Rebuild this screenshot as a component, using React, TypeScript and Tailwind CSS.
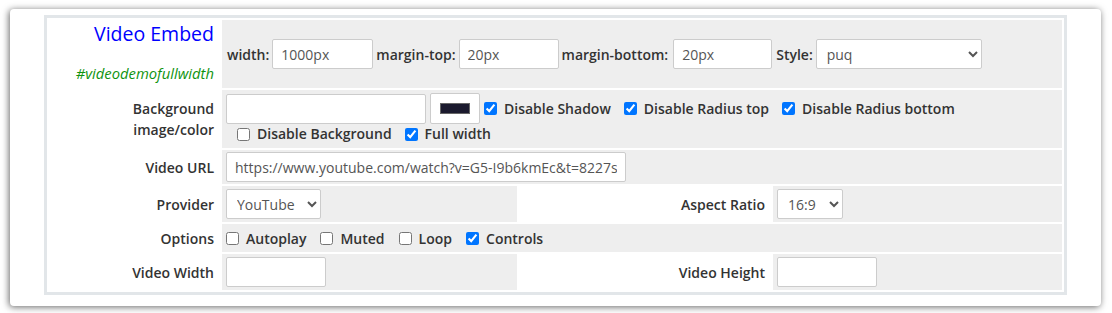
import type { ReactNode } from "react"

const font = { fontFamily: '"Open Sans", "Noto Sans", sans-serif' }

function Check({ label, checked = false, className = "" }: { label: string; checked?: boolean; className?: string }) {
  return (
    <label className={`flex items-center gap-[7px] font-semibold text-[#333] ${className}`}>
      <input type="checkbox" defaultChecked={checked} className="m-0 h-[13px] w-[13px]" />
      <span>{label}</span>
    </label>
  )
}

function Field({ value = "", w }: { value?: string; w: string }) {
  return (
    <input
      type="text"
      defaultValue={value}
      className={`h-[30px] ${w} rounded-[2px] border border-[#ccc] bg-white px-[8px] text-[14px] font-normal text-[#555] outline-none`}
    />
  )
}

function Pick({ value, w }: { value: string; w: string }) {
  return (
    <select
      defaultValue={value}
      className={`h-[30px] ${w} rounded-[2px] border border-[#ccc] bg-white pl-[6px] text-[14px] font-normal text-[#555]`}
    >
      <option>{value}</option>
    </select>
  )
}

function Label({ children, className = "" }: { children: ReactNode; className?: string }) {
  return <td className={`bg-white pr-[6px] text-right align-middle font-semibold text-[#333] ${className}`}>{children}</td>
}

export default function App() {
  return (
    <div className="min-h-[313px] bg-white pt-[9px] pl-[10px] text-[14px]" style={font}>
      <div className="w-[1091px] rounded-[4px] bg-white px-[34px] pt-[6px] pb-[11px] shadow-[-1px_1px_7px_rgba(0,0,0,0.6)]">
        <div className="w-[1023px] border-[3px] border-[#e2e6e9]">
          <table className="w-full table-fixed border-separate border-spacing-[2px]">
            <colgroup>
              <col className="w-[171px]" />
              <col className="w-[295px]" />
              <col className="w-[252px]" />
              <col />
            </colgroup>
            <tbody>
              <tr className="h-[68px]">
                <td className="bg-white pr-[6px] text-right align-top">
                  <div className="text-[19.5px] leading-[28px] text-[#0000ff]">Video Embed</div>
                  <div className="mt-[15px] text-[14.8px] leading-[20px] italic text-[#0f930f]">#videodemofullwidth</div>
                </td>
                <td colSpan={3} className="bg-[#eee] pl-[4px] align-middle">
                  <div className="flex items-center gap-[3px] font-semibold text-[#333]">
                    <span className="ml-[1px]">width:</span>
                    <Field value="1000px" w="w-[101px]" />
                    <span>margin-top:</span>
                    <Field value="20px" w="w-[100px]" />
                    <span>margin-bottom:</span>
                    <Field value="20px" w="w-[99px] ml-[2px]" />
                    <span className="ml-[1px]">Style:</span>
                    <Pick value="puq" w="w-[166px]" />
                  </div>
                </td>
              </tr>
              <tr className="h-[58px]">
                <Label className="leading-[21px]">
                  Background
                  <br />
                  image/color
                </Label>
                <td colSpan={3} className="bg-[#eee] pl-[4px] align-top pt-[3px]">
                  <div className="flex items-center">
                    <Field w="w-[200px]" />
                    <div className="ml-[4px] flex h-[31px] w-[50px] items-center justify-center rounded-[2px] border border-[#ccc] bg-white">
                      <div className="h-[11px] w-[30px] border border-[#666] bg-[#1b1a2e]" />
                    </div>
                    <Check label="Disable Shadow" checked className="ml-[4px]" />
                    <Check label="Disable Radius top" checked className="ml-[13px]" />
                    <Check label="Disable Radius bottom" checked className="ml-[13px]" />
                  </div>
                  <div className="flex items-center pl-[11px] leading-[20px]">
                    <Check label="Disable Background" />
                    <Check label="Full width" checked className="ml-[13px]" />
                  </div>
                </td>
              </tr>
              <tr className="h-[34px]">
                <Label>Video URL</Label>
                <td colSpan={3} className="bg-[#eee] pl-[4px] align-middle">
                  <Field value="https://www.youtube.com/watch?v=G5-I9b6kmEc&t=8227s" w="w-[400px] block" />
                </td>
              </tr>
              <tr className="h-[36px]">
                <Label>Provider</Label>
                <td className="bg-[#eee] pl-[4px] align-middle">
                  <Pick value="YouTube" w="w-[95px] block" />
                </td>
                <Label>Aspect Ratio</Label>
                <td className="bg-[#eee] pl-[4px] align-middle">
                  <Pick value="16:9" w="w-[66px] block" />
                </td>
              </tr>
              <tr className="h-[28px]">
                <Label>Options</Label>
                <td colSpan={3} className="bg-[#eee] pl-[4px] align-middle">
                  <div className="flex items-center">
                    <Check label="Autoplay" />
                    <Check label="Muted" className="ml-[14px]" />
                    <Check label="Loop" className="ml-[14px]" />
                    <Check label="Controls" checked className="ml-[14px]" />
                  </div>
                </td>
              </tr>
              <tr className="h-[36px]">
                <Label>Video Width</Label>
                <td className="bg-[#eee] pl-[4px] align-middle">
                  <Field w="w-[100px] block" />
                </td>
                <Label>Video Height</Label>
                <td className="bg-[#eee] pl-[4px] align-middle">
                  <Field w="w-[100px] block" />
                </td>
              </tr>
            </tbody>
          </table>
        </div>
      </div>
    </div>
  )
}
